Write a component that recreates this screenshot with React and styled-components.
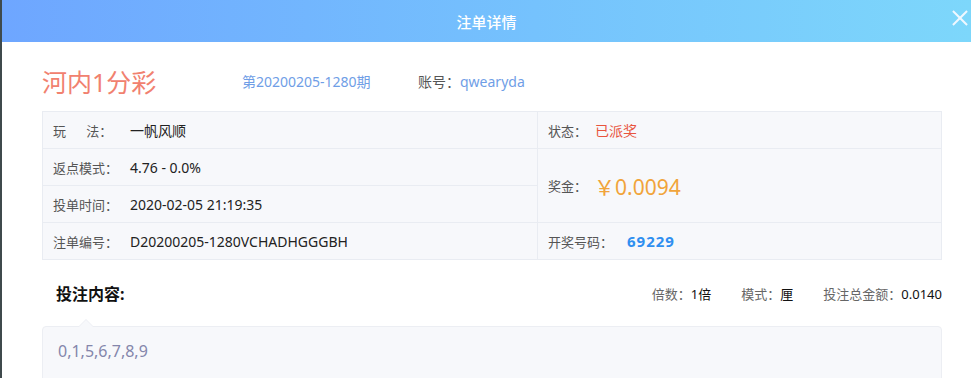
import React from 'react';
import styled, { createGlobalStyle } from 'styled-components';

const GlobalStyle = createGlobalStyle`
  html, body {
    margin: 0;
    padding: 0;
    background: #3f4a4c;
    font-family: "Noto Sans", "Noto Sans CJK SC", sans-serif;
    overflow: hidden;
  }
`;

const Modal = styled.div`
  margin-left: 2px;
  width: 969px;
  height: 378px;
  background: #fff;
  overflow: hidden;
`;

const Header = styled.div`
  height: 42px;
  display: flex;
  align-items: center;
  justify-content: center;
  position: relative;
  background: linear-gradient(90deg, #6ea6ff 0%, #75c2fd 55%, #7dd7fb 100%);
  color: #fff;
  font-size: 15px;
  font-weight: 500;
`;

const Close = styled.span`
  position: absolute;
  right: 3px;
  top: 10px;
  width: 16px;
  height: 16px;
  &::before, &::after {
    content: '';
    position: absolute;
    left: 7px;
    top: -2px;
    width: 2px;
    height: 20px;
    background: #f0f8ff;
    transform: rotate(45deg);
  }
  &::after {
    transform: rotate(-45deg);
  }
`;

const Body = styled.div`
  padding: 0 27px 0 40px;
`;

const TitleRow = styled.div`
  height: 69px;
  display: flex;
  align-items: center;
  padding-top: 8px;
  box-sizing: border-box;
`;

const GameName = styled.div`
  font-size: 25px;
  color: #f1816f;
  width: 200px;
`;

const Issue = styled.div`
  font-size: 14px;
  color: #6f9ee6;
  width: 176px;
`;

const Account = styled.div`
  font-size: 14px;
  color: #555;
  span {
    color: #6f9ee6;
  }
`;

const Table = styled.div`
  display: grid;
  grid-template-columns: 494px 1fr;
  grid-template-rows: repeat(4, 36px);
  border: 1px solid #e9ecf2;
  background: #e9ecf2;
  gap: 1px;
  width: 900px;
  box-sizing: border-box;
`;

const Cell = styled.div`
  background: #f7f8fb;
  display: flex;
  align-items: center;
  padding-left: 10px;
  font-size: 14px;
  color: #222;
  grid-row: ${p => p.$span ? 'span 2' : 'auto'};
`;

const Label = styled.span`
  color: #555;
  font-size: 13px;
  width: ${p => p.$w || 77}px;
  white-space: pre;
`;

const Status = styled.span`
  color: #e8543e;
`;

const Prize = styled.span`
  color: #f1a43a;
  font-size: 21px;
`;

const WinNum = styled.span`
  color: #2f8ff0;
  font-size: 15px;
  font-weight: 700;
  letter-spacing: 1px;
`;

const ContentHead = styled.div`
  display: flex;
  align-items: center;
  justify-content: space-between;
  height: 66px;
  padding: 0 0 0 14px;
  width: 900px;
  box-sizing: border-box;
`;

const ContentTitle = styled.div`
  font-size: 16px;
  font-weight: 700;
  color: #111;
`;

const Meta = styled.div`
  display: flex;
  gap: 30px;
  font-size: 13px;
  color: #666;
  b {
    font-weight: 400;
    color: #111;
  }
`;

const ContentBox = styled.div`
  position: relative;
  width: 900px;
  height: 60px;
  box-sizing: border-box;
  background: #f7f8fb;
  border: 1px solid #eceef3;
  border-radius: 4px;
  padding: 13px 15px;
  font-size: 16px;
  color: #8486ab;
  &::before {
    content: '';
    position: absolute;
    left: 35px;
    top: -8px;
    width: 0;
    height: 0;
    border-left: 8px solid transparent;
    border-right: 8px solid transparent;
    border-bottom: 8px solid #eceef3;
  }
  &::after {
    content: '';
    position: absolute;
    left: 36px;
    top: -7px;
    border-left: 7px solid transparent;
    border-right: 7px solid transparent;
    border-bottom: 7px solid #f7f8fb;
  }
`;

export default function App() {
  return (
    <>
      <GlobalStyle />
      <Modal>
        <Header>
          注单详情
          <Close />
        </Header>
        <Body>
          <TitleRow>
            <GameName>河内1分彩</GameName>
            <Issue>第20200205-1280期</Issue>
            <Account>账号：<span>qwearyda</span></Account>
          </TitleRow>
          <Table>
            <Cell><Label>{'玩      法：'}</Label>一帆风顺</Cell>
            <Cell><Label $w={47}>状态：</Label><Status>已派奖</Status></Cell>
            <Cell><Label>返点模式：</Label>4.76 - 0.0%</Cell>
            <Cell $span><Label $w={46}>奖金：</Label><Prize>￥0.0094</Prize></Cell>
            <Cell><Label>投单时间：</Label>2020-02-05 21:19:35</Cell>
            <Cell><Label>注单编号：</Label>D20200205-1280VCHADHGGGBH</Cell>
            <Cell><Label $w={79}>开奖号码：</Label><WinNum>69229</WinNum></Cell>
          </Table>
          <ContentHead>
            <ContentTitle>投注内容:</ContentTitle>
            <Meta>
              <span>倍数：<b>1倍</b></span>
              <span>模式：<b>厘</b></span>
              <span>投注总金额：<b>0.0140</b></span>
            </Meta>
          </ContentHead>
          <ContentBox>0,1,5,6,7,8,9</ContentBox>
        </Body>
      </Modal>
    </>
  );
}
